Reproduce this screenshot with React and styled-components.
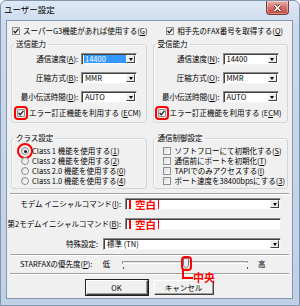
import React from "react";
import styled, { createGlobalStyle } from "styled-components";

const GlobalStyle = createGlobalStyle`
  html, body { margin: 0; padding: 0; background: #fff; }
  body {
    font-family: "Noto Sans CJK JP", "Noto Sans", sans-serif;
    font-size: 7.5px;
    color: #000;
  }
  u { text-underline-offset: 1px; }
`;

const Window = styled.div`
  box-sizing: border-box;
  width: 300px;
  height: 306px;
  display: flex;
  flex-direction: column;
  background: linear-gradient(#dfe9f6, #cbdaed 24px, #bfd1e7);
  border: 1px solid #8295ad;
  border-radius: 6px 6px 0 0;
`;

const TitleBar = styled.div`
  height: 19px;
  display: flex;
  justify-content: space-between;
  align-items: flex-start;
  padding-left: 3px;
`;

const Title = styled.span`
  font-size: 8.5px;
  line-height: 14px;
  padding-top: 1px;
`;

const CloseBtn = styled.div`
  width: 23px;
  height: 14px;
  margin-right: 10px;
  display: grid;
  place-items: center;
  box-sizing: border-box;
  border: 1px solid #7b3b36;
  border-top: none;
  border-radius: 0 0 4px 4px;
  background: linear-gradient(#eab3ab, #d2746b 50%, #c4463d);
  box-shadow: inset 0 0 0 1px rgba(255, 255, 255, 0.35);
`;

const Client = styled.div`
  flex: 1;
  margin: 0 6px 6px 5px;
  border: 1px solid #8497ae;
  background: #f0f0f0;
  padding-top: 5px;
  display: flex;
  flex-direction: column;
`;

const Pair = styled.div`
  display: grid;
  grid-template-columns: 1fr 1fr;
  column-gap: 6px;
  row-gap: 10px;
  padding: 0 4px;
  margin-top: ${(p) => p.$top || 0}px;
`;

const Line = styled.div`
  display: flex;
  align-items: center;
  height: 10px;
  gap: ${(p) => p.$gap || 4}px;
  margin-left: ${(p) => p.$indent || 0}px;
  margin-top: ${(p) => p.$top || 0}px;
  justify-self: ${(p) => (p.$end ? "end" : "start")};
  padding-right: ${(p) => (p.$end ? 5 : 0)}px;
`;

const Text = styled.span`
  white-space: nowrap;
  line-height: 10px;
`;

const Group = styled.fieldset`
  margin: 0;
  min-width: 0;
  padding: ${(p) => p.$pad};
  border: 1px solid #cfd6dc;
  border-radius: 3px;
  box-shadow: inset 1px 1px 0 #fbfbfb;
`;

const Legend = styled.legend`
  padding: 0 2px;
  line-height: 10px;
  white-space: nowrap;
`;

const Fields = styled.div`
  display: grid;
  grid-template-columns: 64px 56px;
  grid-auto-rows: 12px;
  column-gap: 3px;
  row-gap: 7px;
  align-items: center;
`;

const FieldLabel = styled.span`
  text-align: right;
  white-space: nowrap;
  line-height: 10px;
`;

const Box = styled.span`
  flex: none;
  box-sizing: border-box;
  width: 8px;
  height: 8px;
  border: 1px solid #8e8f8f;
  background: linear-gradient(135deg, #dcdcdc, #fff);
  display: grid;
  place-items: center;
  ${(p) => p.$mark && "outline: 2px solid #ff0000; outline-offset: 1px; border-radius: 1px;"}
`;

const Round = styled(Box)`
  border-radius: 50%;
  ${(p) => p.$mark && "outline-offset: 2px;"}
`;

const Dot = styled.span`
  width: 3px;
  height: 3px;
  border-radius: 50%;
  background: #1a1a1a;
`;

const Sunken = styled.div`
  box-sizing: border-box;
  width: ${(p) => p.$w}px;
  height: ${(p) => p.$h || 12}px;
  display: flex;
  align-items: stretch;
  background: #fff;
  border: 1px solid;
  border-color: #8a8a8a #f4f4f4 #f4f4f4 #8a8a8a;
  box-shadow: inset 1px 1px 0 #404040;
  padding: 1px 1px 1px 2px;
`;

const Value = styled.span`
  flex: 1;
  line-height: 8px;
  padding-left: 1px;
  white-space: nowrap;
  background: ${(p) => (p.$sel ? "#3399ff" : "transparent")};
  color: ${(p) => (p.$sel ? "#fff" : "#000")};
`;

const Arrow = styled.span`
  flex: none;
  width: 9px;
  box-sizing: border-box;
  border: 1px solid;
  border-color: #f8f8f8 #404040 #404040 #f8f8f8;
  background: #ececec;
  display: grid;
  place-items: center;
  &::after {
    content: "";
    border-left: 2.5px solid transparent;
    border-right: 2.5px solid transparent;
    border-top: 3px solid #000;
  }
`;

const Blank = styled.span`
  align-self: center;
  margin-left: 1px;
  padding: 0 2px 0 4px;
  border-left: 2px solid #ff0000;
  border-right: 1px solid #ff0000;
  color: #f00;
  font-weight: 700;
  font-size: 10.5px;
  line-height: 9px;
  white-space: nowrap;
`;

const Separator = styled.div`
  margin: ${(p) => p.$top || 0}px 3px 0;
  border-top: 1px solid #a0a0a0;
  border-bottom: 1px solid #fff;
`;

const FormRow = styled.div`
  display: flex;
  justify-content: flex-end;
  align-items: center;
  gap: ${(p) => p.$gap || 4}px;
  height: 12px;
  margin-top: ${(p) => p.$top || 0}px;
  padding-right: 11px;
`;

const SliderRow = styled.div`
  display: flex;
  align-items: center;
  height: 12px;
  margin-top: 2px;
  padding-left: 13px;
`;

const SliderWrap = styled.div`
  position: relative;
  width: 126px;
  height: 12px;
  margin: 0 10px 0 12px;
`;

const Callout = styled.span`
  position: absolute;
  left: 71px;
  top: 14px;
  z-index: 2;
  color: #f00;
  font-weight: 700;
  font-size: 11px;
  line-height: 11px;
  white-space: nowrap;
`;

const Marker = styled.svg`
  position: absolute;
  left: 58px;
  top: -2px;
  z-index: 2;
  overflow: visible;
`;

const Buttons = styled.div`
  display: flex;
  justify-content: center;
  gap: 6px;
  margin-top: 5px;
`;

const Button = styled.div`
  box-sizing: border-box;
  width: ${(p) => p.$w}px;
  height: 15px;
  display: grid;
  place-items: center;
  line-height: 10px;
  border: 1px solid;
  border-color: #fff #404040 #404040 #fff;
  box-shadow: inset -1px -1px 0 #a0a0a0;
  background: #f0f0f0;
  ${(p) => p.$default && "outline: 1px solid #202020;"}
`;

const Check = ({ checked, mark }) => (
  <Box $mark={mark}>
    {checked && (
      <svg width="6" height="6" viewBox="0 0 6 6">
        <path d="M0.6 3 L2.3 4.8 L5.4 0.9" fill="none" stroke="#222" strokeWidth="1.3" />
      </svg>
    )}
  </Box>
);

const Radio = ({ on, mark }) => <Round $mark={mark}>{on && <Dot />}</Round>;

const Combo = ({ w, value, sel, arrow = true }) => (
  <Sunken $w={w}>
    <Value $sel={sel}>{value}</Value>
    {arrow && <Arrow />}
  </Sunken>
);

const CapabilityGroup = ({ title, rows, ecm }) => (
  <Group $pad="4px 2px 4px 2px">
    <Legend>{title}</Legend>
    <Fields>
      {rows.map((r, i) => (
        <React.Fragment key={i}>
          <FieldLabel>{r.label}</FieldLabel>
          <Combo w={56} value={r.value} sel={r.sel} />
        </React.Fragment>
      ))}
    </Fields>
    <Line $top={5} $indent={ecm.indent} $gap={4}>
      <Check checked mark />
      <Text>{ecm.text}</Text>
    </Line>
  </Group>
);

const Slider = () => (
  <svg width="126" height="12" viewBox="0 0 126 12">
    <rect x="0.5" y="3.5" width="125" height="2" fill="#e6e6e6" stroke="#9a9a9a" strokeWidth="1" />
    <line x1="1" y1="5.5" x2="126" y2="5.5" stroke="#ffffff" />
    <line x1="1.5" y1="9" x2="1.5" y2="11" stroke="#555" />
    <line x1="125.5" y1="9" x2="125.5" y2="11" stroke="#555" />
    <path d="M61.5 0.5 H66.5 V7.5 L64 10.5 L61.5 7.5 Z" fill="#e9eef5" stroke="#6f7f95" />
  </svg>
);

export default function App() {
  return (
    <>
      <GlobalStyle />
      <Window>
        <TitleBar>
          <Title>ユーザー設定</Title>
          <CloseBtn>
            <svg width="9" height="8" viewBox="0 0 9 8">
              <path d="M1.5 1 L7.5 7 M7.5 1 L1.5 7" stroke="#5a1f1b" strokeWidth="3" />
              <path d="M1.5 1 L7.5 7 M7.5 1 L1.5 7" stroke="#fff" strokeWidth="1.6" />
            </svg>
          </CloseBtn>
        </TitleBar>
        <Client>
          <Pair>
            <Line $indent={1} $gap={3}>
              <Check checked />
              <Text>スーパーG3機能があれば使用する(<u>G</u>)</Text>
            </Line>
            <Line $end $gap={3}>
              <Check checked />
              <Text>相手先のFAX番号を取得する(<u>Q</u>)</Text>
            </Line>
          </Pair>

          <Pair $top={3}>
            <CapabilityGroup
              title="送信能力"
              rows={[
                { label: <>通信速度(<u>A</u>):</>, value: "14400", sel: true },
                { label: <>圧縮方式(<u>B</u>):</>, value: "MMR" },
                { label: <>最小伝送時間(<u>D</u>):</>, value: "AUTO" },
              ]}
              ecm={{ indent: 3, text: <>エラー訂正機能を利用する (<u>E</u>CM)</> }}
            />
            <CapabilityGroup
              title="受信能力"
              rows={[
                { label: <>通信速度(<u>N</u>):</>, value: "14400" },
                { label: <>圧縮方式(<u>O</u>):</>, value: "MMR" },
                { label: <>最小伝送時間(<u>U</u>):</>, value: "AUTO" },
              ]}
              ecm={{ indent: 2, text: <>エラー訂正機能を利用する (E<u>C</u>M)</> }}
            />

            <Group $pad="3px 2px 2px 2px">
              <Legend>クラス設定</Legend>
              <Line $indent={7} $gap={3}>
                <Radio on mark />
                <Text>Class 1 機能を使用する(<u>1</u>)</Text>
              </Line>
              <Line $indent={7} $gap={3}>
                <Radio />
                <Text>Class 2 機能を使用する(<u>2</u>)</Text>
              </Line>
              <Line $indent={7} $gap={3}>
                <Radio />
                <Text>Class 2.0 機能を使用する(<u>0</u>)</Text>
              </Line>
              <Line $indent={7} $gap={3}>
                <Radio />
                <Text>Class 1.0 機能を使用する(<u>4</u>)</Text>
              </Line>
            </Group>
            <Group $pad="3px 2px 2px 2px">
              <Legend>通信制御設定</Legend>
              <Line $indent={7}>
                <Check />
                <Text>ソフトフローにて初期化する(<u>S</u>)</Text>
              </Line>
              <Line $indent={7}>
                <Check />
                <Text>通信前にポートを初期化(<u>T</u>)</Text>
              </Line>
              <Line $indent={7}>
                <Check />
                <Text>TAPIでのみアクセスする(<u>I</u>)</Text>
              </Line>
              <Line $indent={7}>
                <Check />
                <Text>ポート速度を38400bpsにする(<u>3</u>)</Text>
              </Line>
            </Group>
          </Pair>

          <Separator $top={4} />

          <FormRow $top={3}>
            <Text>モデム イニシャルコマンド(<u>I</u>):</Text>
            <Sunken $w={156}>
              <Blank>空白</Blank>
              <Value />
              <Arrow />
            </Sunken>
          </FormRow>
          <FormRow $top={8}>
            <Text>第2モデムイニシャルコマンド(<u>B</u>):</Text>
            <Sunken $w={156}>
              <Blank>空白</Blank>
              <Value />
            </Sunken>
          </FormRow>
          <FormRow $top={8} $gap={5}>
            <Text>特殊設定:</Text>
            <Combo w={178} value="標準 (TN)" />
          </FormRow>

          <Separator $top={4} />

          <SliderRow>
            <Text>STARFAXの優先度(<u>P</u>):</Text>
            <Text style={{ marginLeft: 10 }}>低</Text>
            <SliderWrap>
              <Slider />
              <Marker width="20" height="24" viewBox="0 0 20 24">
                <rect x="2" y="1" width="9" height="13" rx="3" fill="none" stroke="#ff0000" strokeWidth="2" />
                <path d="M3 14 V22 H13" fill="none" stroke="#ff0000" strokeWidth="2" />
              </Marker>
              <Callout>中央</Callout>
            </SliderWrap>
            <Text>高</Text>
          </SliderRow>

          <Separator $top={3} />

          <Buttons>
            <Button $w={62} $default>OK</Button>
            <Button $w={60}>キャンセル</Button>
          </Buttons>
        </Client>
      </Window>
    </>
  );
}
